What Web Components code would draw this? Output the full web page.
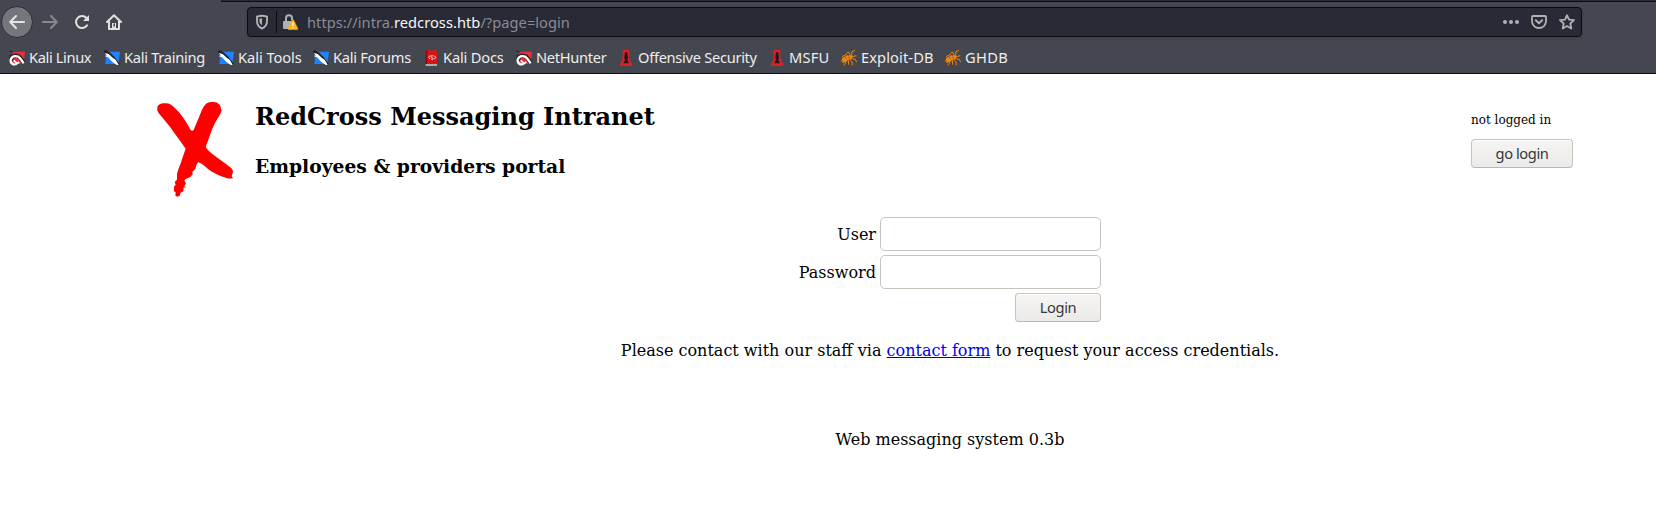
<!DOCTYPE html>
<html lang="en"><head><meta charset="utf-8"><title>RedCross Messaging Intranet</title>
<style>
html,body{margin:0;height:519px;overflow:hidden;background:#fff}
body{font:16px/19px "DejaVu Serif",serif;color:#000}
</style></head><body>
<rc-browser></rc-browser>
<rc-portal></rc-portal>
<script>
const define=(name,html,setup)=>customElements.define(name,class extends HTMLElement{
  connectedCallback(){
    if(this.shadowRoot)return;
    this.attachShadow({mode:'open'}).innerHTML=html;
    if(setup)setup(this,this.shadowRoot);
  }
});
const icon=(art)=>`<svg width="16" height="16" viewBox="0 0 48 48">${art}</svg>`;
const icons={
  kali:icon('<path d="M9 5h39l-4 37H6z" fill="#e8303a"/><path d="M1 3l12 4M1 18l9-4" stroke="#202329" stroke-width="3"/><path d="M8 34C2 22 14 14 26 18c9 3 13 13 19 22" stroke="#25262b" stroke-width="13" fill="none"/><path d="M23 42C12 46 3 38 5 29 8 19 18 16 27 20c8 4 12 13 17 20" stroke="#fff" stroke-width="7" fill="none"/><path d="M14 31l9 8M22 42l9-6" stroke="#fff" stroke-width="5"/>'),
  tool:icon('<path d="M8 5h40l-5 37H4z" fill="#1f82ff"/><path d="M1 3l14 8 14 14 15 20" stroke="#202329" stroke-width="9" fill="none"/><path d="M3 9l11 3 13 12 8 5 9 15-4 2-12-8-9-9-12-13z" fill="#fff"/><path d="M4 18l10 2 12 14" stroke="#fff" stroke-width="3" fill="none"/>'),
  docs:icon('<path d="M7 3l4-2h31v41H7z" fill="#d51419"/><path d="M7 3l6-2v41H7z" fill="#940b10"/><path d="M8 43h34v4H8z" fill="#ddd"/><path d="M21 16l-4 6 4 5M34 17l4 5-4 6M31 18c-7-3-10 2-4 5s4 7-3 4" stroke="#fff" stroke-width="2.5" fill="none"/>'),
  tower:icon('<path d="M14 0h20v28l9 14v6H6v-6l8-14z" fill="#dc2024"/><path d="M21 7h7l2 16-2 7 5 10H16l5-10-2-8z" fill="#21171a"/>'),
  bug:icon('<g fill="none" stroke="#e88717" stroke-width="3"><path d="M24 25l-8-12-13 7M30 22L24 7l-7 1M32 20l1-15 9-4M34 20l12-3M31 26l12 2 4 9M26 28l7 8 1 10M22 30l1 14M18 30L9 46M12 29L1 35"/></g><path d="M3 24l12-6 12-2 9 3-4 7-10 3-9 7-10 4 4-8-5 1z" fill="#e88717"/><path d="M12 23l5 2M23 20l2 5" stroke="#704019" stroke-width="2"/>')
};
define('rc-bookmark',`<style>:host{display:flex;align-items:center;gap:4px;height:20px;flex:none;box-sizing:border-box}.icon{display:block;width:16px;height:16px;flex:none}svg{display:block}span{white-space:nowrap;margin-top:-2px}</style><div class="icon"></div><span><slot></slot></span>`,(h,r)=>{r.querySelector('.icon').innerHTML=icons[h.getAttribute('icon')];h.style.width=h.getAttribute('size')+'px';h.style.letterSpacing=h.getAttribute('track')+'px'});
define('rc-address',`<style>
:host{display:flex;align-items:center;box-sizing:border-box;width:1335px;height:30px;border:1px solid #0c0c0d;border-radius:4px;background:#282a36;color:#8b8b92;box-shadow:0 1px 3px #0002;font-size:14.67px;line-height:20px}
svg{display:block;flex:none}.lead{display:flex;align-items:center;width:49px;height:30px;flex:none}.sep{width:1px;height:22px;background:#0c0c0d;margin:0 8px 0 6px}.shield{margin-left:6px}.url{flex:1;margin-left:6px;white-space:nowrap;letter-spacing:.03px}b{font-weight:400;color:#f9f9fa}.actions{display:flex;gap:12px;margin-right:6px}
</style><div class="lead"><svg class="shield" width="16" height="16" viewBox="0 0 16 16" fill="none" stroke="#b1b1b3"><path d="M8 1.8c-2 0-3.5.4-5 .8v4.2c0 4 2.2 6.6 5 7.7 2.8-1.1 5-3.7 5-7.7V2.6c-1.5-.4-3-.8-5-.8z" stroke-width="1.9"/><path d="M8 4.3v7C6.2 10 5.4 8.5 5.4 6.5V4.7z" fill="#b1b1b3" stroke="none"/></svg><div class="sep"></div></div>
<svg width="18" height="16" viewBox="0 0 18 16" style="margin-left:-16px;margin-right:2px"><path d="M5 7V4.3a3 3 0 0 1 6 0V6" fill="none" stroke="#b1b1b3" stroke-width="2"/><path d="M3 7h8v8H3q-1 0-1-1V8q0-1 1-1z" fill="#b1b1b3"/><path d="M11.2 6.2q.7-.9 1.4 0l4.2 8.2q.4 1-.7 1H7.7q-1 0-.6-1z" fill="#ffb21c" stroke="#ffb21c" stroke-width=".6"/><path d="M12 8.4v3.6M12 13v1.2" stroke="#fff" stroke-width="1.5"/></svg>
<div class="url">https://intra.<b>redcross.htb</b>/?page=login</div>
<div class="actions"><svg width="16" height="16" viewBox="0 0 16 16" fill="#b1b1b3"><circle cx="2" cy="8" r="2"/><circle cx="8" cy="8" r="2"/><circle cx="14" cy="8" r="2"/></svg><svg width="16" height="16" viewBox="0 0 16 16" fill="none" stroke="#b1b1b3" stroke-linecap="round" stroke-linejoin="round"><path d="M2 2h12q1 0 1 1v4.3a7 6.7 0 0 1-14 0V3q0-1 1-1z" stroke-width="1.8"/><path d="M4.8 6.3L8 9.3l3.2-3" stroke-width="2"/></svg><svg width="16" height="16" viewBox="0 0 16 16" fill="none" stroke="#b1b1b3" stroke-width="1.8" stroke-linejoin="round"><path d="M8 1.2l2 4.5 5 .5-3.7 3.3 1 5L8 12l-4.3 2.5 1-5L1 6.2l5-.5z"/></svg></div>`);
define('rc-browser',`<style>
:host{display:flex;flex-direction:column;box-sizing:border-box;height:74px;background:#44474f;border-bottom:1px solid #0c0c0d;font:14.67px/20px "Noto Sans",sans-serif;color:#eee}
.edge{height:2px;margin-left:221px;background:linear-gradient(#282a36 50%,#0c0c0d 50%);flex:none}.nav{height:40px;display:flex;align-items:center;flex:none}.back{width:30px;height:30px;border:1px solid #2c2e33;border-radius:50%;display:grid;place-items:center;background:#74767b;margin-left:1px}.nav svg{display:block}.fwd{margin-left:9px;opacity:.45}.reload{margin-left:16px}.home{margin-left:16px}rc-address{margin-left:125px}
.marks{display:flex;height:31px;align-items:center;padding-left:9px}
</style><div class="edge"></div><div class="nav"><div class="back"><svg width="16" height="16" viewBox="0 0 16 16" fill="none" stroke="#e4e4e3" stroke-width="2" stroke-linecap="round" stroke-linejoin="round"><path d="M7 2L1.2 8 7 14M1.5 8H15"/></svg></div><svg class="fwd" width="16" height="16" viewBox="0 0 16 16" fill="none" stroke="#d9d9d9" stroke-width="2" stroke-linecap="round" stroke-linejoin="round"><path d="M9 2l5.8 6L9 14M14.5 8H1"/></svg><svg class="reload" width="16" height="16" viewBox="0 0 16 16"><path d="M12.5 4A6 6 0 1 0 13 11.4" fill="none" stroke="#e1e1df" stroke-width="2" stroke-linecap="round"/><path d="M15 1v6H9z" fill="#e1e1df"/></svg><svg class="home" width="16" height="16" viewBox="0 0 16 16" fill="none" stroke="#e1e1df" stroke-width="2" stroke-linecap="round" stroke-linejoin="round"><path d="M1 8l7-6.8L15 8M3 7v8h10V7"/><path d="M6 9h4v6H6z" fill="#e1e1df" stroke="none"/><path d="M8.2 10v2" stroke="#44474f" stroke-width="1.5"/></svg><rc-address></rc-address></div>
<div class="marks"><rc-bookmark icon="kali" size="95" track="-.38">Kali Linux</rc-bookmark><rc-bookmark icon="tool" size="114" track="-.3">Kali Training</rc-bookmark><rc-bookmark icon="tool" size="95" track="-.05">Kali Tools</rc-bookmark><rc-bookmark icon="tool" size="110" track="-.28">Kali Forums</rc-bookmark><rc-bookmark icon="docs" size="93" track="-.18">Kali Docs</rc-bookmark><rc-bookmark icon="kali" size="102" track="-.3">NetHunter</rc-bookmark><rc-bookmark icon="tower" size="151" track="-.3">Offensive Security</rc-bookmark><rc-bookmark icon="tower" size="72" track=".2">MSFU</rc-bookmark><rc-bookmark icon="bug" size="104" track=".1">Exploit-DB</rc-bookmark><rc-bookmark icon="bug" size="70" track=".3">GHDB</rc-bookmark></div>`);
define('rc-button',`<style>:host{display:block;width:102px;height:29px}button{display:block;width:100%;height:29px;box-sizing:border-box;margin:0;padding:0 0 2px;border:1px solid #c8c3bd;border-bottom-color:#bbb6b0;border-radius:4px;background:linear-gradient(#f6f5f4,#ebeae9);box-shadow:inset 0 1px #fff;color:#33393b;font:14.67px/20px "Noto Sans",sans-serif;letter-spacing:-.42px}</style><button><slot></slot></button>`);
define('rc-field',`<style>:host{display:flex;align-items:center;justify-content:flex-end;gap:4px;width:302px;height:34px}input{width:221px;height:34px;box-sizing:border-box;border:1px solid #c8c3bd;border-radius:5px;background:#fff;margin:0;padding:0 8px;font:14.67px "Noto Sans",sans-serif}</style><label><slot></slot></label><input>`,(h,r)=>{r.querySelector('input').type=h.getAttribute('type')||'text'});
define('rc-logo',`<style>:host,svg{display:block;width:80px;height:100px}</style><svg viewBox="45 30 240 300"><path fill="#f00" d="M52 55C51 43 64 39 78 40c11 0 18 5 24 12C122 70 138 93 152 120q5 5 9 0L183 67C190 50 197 39 208 37 222 34 238 37 241 49L245 62C241 75 232 85 225 99 214 120 207 146 197 171 203 181 214 189 226 199L255 220C266 229 280 236 279 246L275 259 279 264C268 268 258 263 248 260 233 255 218 248 204 237 193 229 185 219 175 217 170 219 168 231 166 237L157 245 158 253 151 261 137 267 133 272 138 280 133 288 138 293 131 292 130 304 122 308 119 317 112 320 106 317 107 307 102 304 102 290 107 284 104 276 111 269 111 252C117 230 122 224 126 208L137 176C122 155 105 132 91 112 76 91 57 73 52 62z"/></svg>`);
define('rc-portal',`<style>
:host{display:block;height:445px;font:16px/19px "DejaVu Serif",serif}header{display:flex;height:143px;box-sizing:border-box;padding:26px 83px 0 155px}.titles{margin-left:20px;flex:1}h1{font-size:24px;line-height:28px;margin:3px 0 24px}h2{font-size:18.72px;line-height:22px;margin:0}.session{width:102px;font-size:12px;line-height:14px;padding-top:13px}.session rc-button{margin-top:12px}
main{padding-left:244px;display:flex;flex-direction:column;align-items:center}form{display:flex;flex-direction:column;gap:4px;align-items:flex-end;width:302px}form rc-button{width:86px}p{margin:19px 0 0;white-space:nowrap}a{color:#00e;text-decoration:underline}footer{margin-top:70px}
</style><header><rc-logo></rc-logo><div class="titles"><h1>RedCross Messaging Intranet</h1><h2>Employees &amp; providers portal</h2></div><div class="session">not logged in<rc-button>go login</rc-button></div></header>
<main><form><rc-field>User</rc-field><rc-field type="password">Password</rc-field><rc-button>Login</rc-button></form><p>Please contact with our staff via <a href="#">contact form</a> to request your access credentials.</p><footer>Web messaging system 0.3b</footer></main>`);
</script></body></html>
